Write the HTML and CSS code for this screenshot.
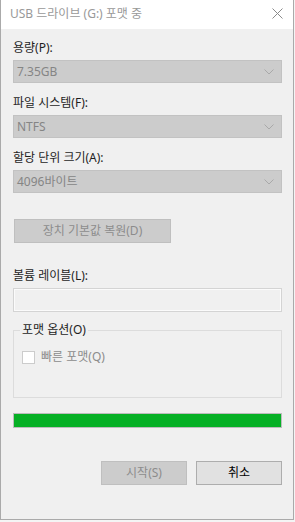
FILE: index.html
```html
<!DOCTYPE html>
<html lang="ko">
<head>
    <meta charset="UTF-8">
    <meta name="viewport" content="width=device-width, initial-scale=1.0">
    <title>USB 드라이브 (G:) 포맷 중</title>
    <link rel="stylesheet" href="styles.css">
</head>
<body>

    <div class="window">
        <div class="titlebar">
            <span class="title">USB 드라이브 (G:) 포맷 중</span>
            <svg class="close" width="11" height="11" viewBox="0 0 11 11">
                <path d="M0.5 0.5 L10.5 10.5 M10.5 0.5 L0.5 10.5" stroke="#8a8a8a" stroke-width="1" fill="none"/>
            </svg>
        </div>

        <div class="content">
            <div class="field">
                <div class="label">용량(P):</div>
                <div class="combo">
                    <span>7.35GB</span>
                    <svg class="chevron" width="10" height="6" viewBox="0 0 10 6"><path d="M0.5 0.5 L5 5 L9.5 0.5" stroke="#a9a9a9" fill="none"/></svg>
                </div>
            </div>

            <div class="field">
                <div class="label">파일 시스템(F):</div>
                <div class="combo">
                    <span>NTFS</span>
                    <svg class="chevron" width="10" height="6" viewBox="0 0 10 6"><path d="M0.5 0.5 L5 5 L9.5 0.5" stroke="#a9a9a9" fill="none"/></svg>
                </div>
            </div>

            <div class="field">
                <div class="label">할당 단위 크기(A):</div>
                <div class="combo">
                    <span>4096바이트</span>
                    <svg class="chevron" width="10" height="6" viewBox="0 0 10 6"><path d="M0.5 0.5 L5 5 L9.5 0.5" stroke="#a9a9a9" fill="none"/></svg>
                </div>
            </div>

            <button class="btn btn-restore" disabled>장치 기본값 복원(D)</button>

            <div class="field field-volume">
                <div class="label">볼륨 레이블(L):</div>
                <div class="edit"></div>
            </div>

            <fieldset class="options">
                <legend>포맷 옵션(O)</legend>
                <label class="check"><span class="box"></span>빠른 포맷(Q)</label>
            </fieldset>

            <div class="progress"><div class="bar" style="width: 100%"></div></div>

            <div class="actions">
                <button class="btn" disabled>시작(S)</button>
                <button class="btn btn-cancel">취소</button>
            </div>
        </div>
    </div>

</body>
</html>
```

FILE: styles.css
```css
html, body {
    margin: 0;
    padding: 0;
}

body {
    background: #f4f4f4;
    font-family: "Noto Sans", "Noto Sans CJK KR", sans-serif;
    font-size: 12px;
    color: #1e1e1e;
    width: 295px;
    height: 522px;
    overflow: hidden;
}

.window {
    box-sizing: border-box;
    width: 294px;
    height: 520px;
    background: #f0f0f0;
    border: 1px solid #aaaaaa;
    border-top: none;
}

.titlebar {
    height: 29px;
    background: #fff;
    display: flex;
    align-items: center;
    justify-content: space-between;
    padding: 0 10px 0 9px;
}

.title {
    color: #999;
    line-height: 16px;
    margin-top: -2px;
}

.close {
    margin-top: -3px;
}

.content {
    padding: 11px 11px 0 12px;
}

.field {
    display: flex;
    flex-direction: column;
    gap: 4px;
    margin-bottom: 12px;
}

.label {
    line-height: 16px;
    height: 16px;
}

.combo {
    box-sizing: border-box;
    height: 23px;
    background: #cccccc;
    border: 1px solid #c2c2c2;
    color: #858585;
    display: flex;
    align-items: center;
    justify-content: space-between;
    padding: 0 4px 0 3px;
    line-height: 16px;
}

.chevron {
    margin-right: 3px;
}

.btn {
    box-sizing: border-box;
    height: 24px;
    width: 86px;
    font-family: inherit;
    font-size: 12px;
    line-height: 16px;
    padding: 0;
    background: #cccccc;
    border: 1px solid #bfbfbf;
    color: #8c8c8c;
}

.btn-restore {
    display: block;
    width: 157px;
    margin: 26px 0 25px 1px;
}

.btn-cancel {
    background: #e1e1e1;
    border-color: #adadad;
    color: #000;
}

.field-volume {
    margin-bottom: 10px;
}

.edit {
    box-sizing: border-box;
    height: 24px;
    border: 1px solid #d4d4d4;
    box-shadow: inset 0 0 0 1px #fbfbfb;
    background: #f0f0f0;
}

.options {
    margin: 0;
    padding: 11px 8px 32px 8px;
    border: 1px solid #dcdcdc;
    min-width: 0;
}

.options legend {
    padding: 0 2px;
    margin-left: -2px;
    line-height: 16px;
}

.check {
    display: flex;
    align-items: center;
    gap: 6px;
    line-height: 16px;
    color: #8c8c8c;
}

.box {
    box-sizing: border-box;
    width: 13px;
    height: 13px;
    background: #fff;
    border: 1px solid #cccccc;
}

.progress {
    box-sizing: border-box;
    height: 15px;
    margin-top: 15px;
    border: 1px solid #bcbcbc;
    background: #e6e6e6;
}

.bar {
    height: 100%;
    background: #06b025;
}

.actions {
    display: flex;
    justify-content: flex-end;
    gap: 9px;
    margin-top: 33px;
}
```
